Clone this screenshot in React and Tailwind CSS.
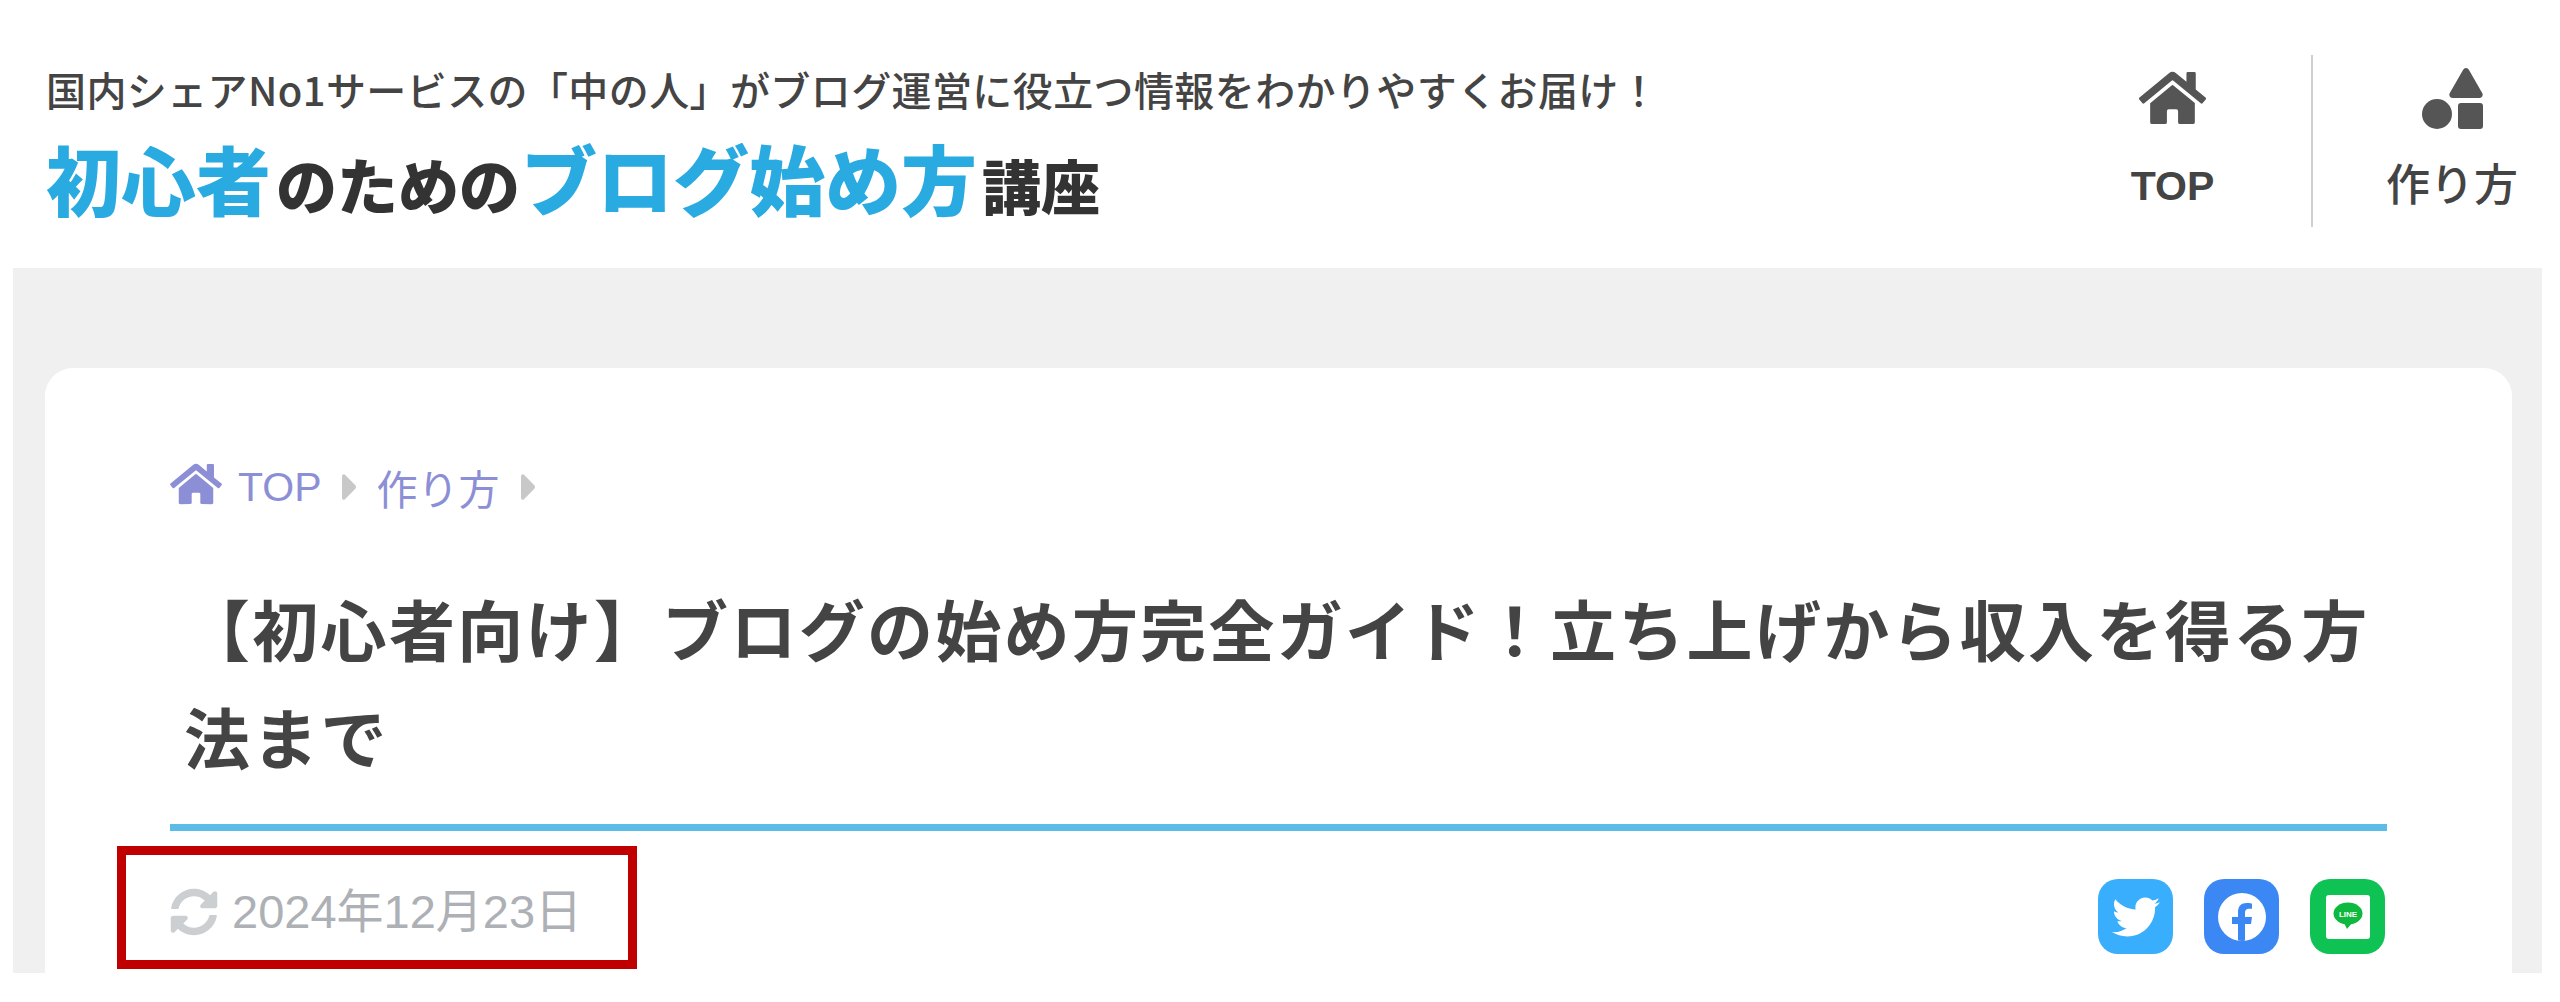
const jp = '"Noto Sans CJK JP","Liberation Sans",sans-serif';
const latin = '"Liberation Sans","Noto Sans CJK JP",sans-serif';

function House({ className }) {
  return (
    <svg viewBox="0 0 576 512" className={className} fill="currentColor">
      <path d="M280.4 148.3L96 300.1V464a16 16 0 0 0 16 16l112.100-.3a16 16 0 0 0 15.900-16V368a16 16 0 0 1 16-16h64a16 16 0 0 1 16 16v95.600a16 16 0 0 0 16 16.100L464 480a16 16 0 0 0 16-16V300L295.700 148.300a12.200 12.200 0 0 0-15.300 0zM571.600 251.500L488 182.600V44.100a12 12 0 0 0-12-12h-56a12 12 0 0 0-12 12v72.600L318.500 43a48 48 0 0 0-61 0L4.300 251.500a12 12 0 0 0-1.600 16.900l25.500 31A12 12 0 0 0 45.200 301l235.200-193.700a12.200 12.200 0 0 1 15.300 0L530.900 301a12 12 0 0 0 16.900-1.600l25.500-31a12 12 0 0 0-1.700-16.900z" />
    </svg>
  );
}

function Shapes({ className }) {
  return (
    <svg viewBox="0 0 61 61" className={className} fill="currentColor">
      <path d="M44 0c1.300 0 2.300.8 3 2l13.200 23c1.300 2.300-.2 5-2.900 5H30.700c-2.700 0-4.200-2.700-2.900-5L41 2c.7-1.200 1.700-2 3-2z" />
      <ellipse cx="15" cy="46" rx="15" ry="15" />
      <rect x="36" y="35" width="25" height="26" rx="3" />
    </svg>
  );
}

function Sync({ className }) {
  return (
    <svg viewBox="0 0 512 512" className={className} fill="currentColor">
      <path d="M370.720 133.280C339.458 104.008 298.888 87.962 255.848 88c-77.458.068-144.328 53.178-162.791 126.850-1.344 5.363-6.122 9.150-11.651 9.150H24.103c-7.498 0-13.194-6.807-11.807-14.176C33.933 94.924 134.813 8 256 8c66.448 0 126.791 26.136 171.315 68.685L463.030 40.970C478.149 25.851 504 36.559 504 57.941V192c0 13.255-10.745 24-24 24H345.941c-21.382 0-32.090-25.851-16.971-40.971l41.750-41.749zM32 296h134.059c21.382 0 32.090 25.851 16.971 40.971l-41.750 41.750c31.262 29.273 71.835 45.319 114.876 45.280 77.418-.070 144.315-53.144 162.787-126.849 1.344-5.363 6.122-9.150 11.651-9.150h57.304c7.498 0 13.194 6.807 11.807 14.176C478.067 417.076 377.187 504 256 504c-66.448 0-126.791-26.136-171.315-68.685L48.970 471.030C33.851 486.149 8 475.441 8 454.059V320c0-13.255 10.745-24 24-24z" />
    </svg>
  );
}

function Caret({ className }) {
  return (
    <svg viewBox="0 0 14 26" className={className} fill="currentColor">
      <path d="M0 2.500c0-2 1.700-3 3-1.800l10.300 10.500c.9.900.9 2.700 0 3.600L3 25.300C1.700 26.500 0 25.500 0 23.500z" />
    </svg>
  );
}

function Twitter({ className }) {
  return (
    <svg viewBox="0 0 512 512" className={className} fill="currentColor">
      <path d="M459.370 151.716c.325 4.548.325 9.097.325 13.645 0 138.720-105.583 298.558-298.558 298.558-59.452 0-114.680-17.219-161.137-47.106 8.447.974 16.568 1.299 25.340 1.299 49.055 0 94.213-16.568 130.274-44.832-46.132-.975-84.792-31.188-98.112-72.772 6.498.974 12.995 1.624 19.818 1.624 9.421 0 18.843-1.300 27.614-3.573-48.081-9.747-84.143-51.980-84.143-102.985v-1.299c13.969 7.797 30.214 12.670 47.431 13.319-28.264-18.843-46.781-51.005-46.781-87.391 0-19.492 5.197-37.360 14.294-52.954 51.655 63.675 129.300 105.258 216.365 109.807-1.624-7.797-2.599-15.918-2.599-24.040 0-57.828 46.782-104.934 104.934-104.934 30.213 0 57.502 12.670 76.670 33.137 23.715-4.548 46.456-13.320 66.599-25.340-7.798 24.366-24.366 44.833-46.132 57.827 21.117-2.273 41.584-8.122 60.426-16.243-14.292 20.791-32.161 39.308-52.628 54.253z" />
    </svg>
  );
}

function Facebook({ className }) {
  return (
    <svg viewBox="0 0 48 48" className={className}>
      <circle cx="24" cy="24" r="24" fill="#ffffff" />
      <path fill="#3b88f5" d="M33 31l1-7h-7v-4.500c0-2 1-3.800 4-3.800h3V10.500S31.300 10 28.700 10c-5.400 0-8.700 3.200-8.700 9V24h-6v7h6v16.600c1.300.2 2.600.4 4 .4s2.700-.1 3-.4V31z" />
    </svg>
  );
}

function LineIcon({ className }) {
  return (
    <svg viewBox="0 0 44 44" className={className}>
      <rect width="44" height="44" rx="3" fill="#ffffff" />
      <ellipse cx="22" cy="18.500" rx="14.500" ry="11" fill="#0fb83f" />
      <path d="M18 28h8l-5 6z" fill="#0fb83f" />
      <text x="22" y="21.500" textAnchor="middle" fontSize="8" fontWeight="700" fill="#ffffff" fontFamily="Liberation Sans">LINE</text>
    </svg>
  );
}

export default function App() {
  return (
    <div className="relative h-[1002px] bg-white overflow-hidden" style={{ fontFamily: jp }}>
      <header className="h-[268px] flex justify-between pl-[46px]">
        <div className="pt-[64px]">
          <p className="text-[40px] leading-[50px] font-medium text-[#444444] whitespace-nowrap tracking-[0.4px]">国内シェアNo1サービスの「中の人」がブログ運営に役立つ情報をわかりやすくお届け！</p>
          <p className="mt-[23px] font-black text-[#333333] whitespace-nowrap flex items-baseline leading-[80px] h-[80px]">
            <span className="text-[75px] text-[#29abe2]">初心者</span>
            <span className="ml-[5px] text-[61px]">のための</span>
            <span className="ml-[1px] text-[76px] text-[#29abe2]">ブログ始め方</span>
            <span className="ml-[5px] text-[59px]">講座</span>
          </p>
        </div>
        <nav className="flex pt-[55px] h-[227px]">
          <div className="w-[279px] h-[172px] border-r-2 border-[#d0d0d0] flex flex-col items-center">
            <House className="w-[67px] h-[60px] text-[#555555] mt-[13px]" />
            <span className="mt-[33px] text-[41px] leading-[50px] font-bold text-[#444444]" style={{ fontFamily: latin }}>TOP</span>
          </div>
          <div className="w-[247px] pl-[31px] h-[172px] flex flex-col items-center">
            <Shapes className="w-[61px] h-[61px] text-[#555555] mt-[13px]" />
            <span className="mt-[28px] text-[44px] leading-[50px] font-medium text-[#444444]">作り方</span>
          </div>
        </nav>
      </header>
      <main className="mx-[13px] w-[2529px] h-[705px] bg-[#f0f0f0] pt-[100px] px-[32px]">
        <section className="h-[605px] w-[2467px] bg-white rounded-t-[28px] px-[125px]">
          <nav className="pt-[92px] h-[146px] flex items-center text-[#8c8fd6] text-[41px] leading-[50px]">
            <House className="w-[52px] h-[46px] -mt-[6px]" />
            <span className="ml-[16px]" style={{ fontFamily: latin }}>TOP</span>
            <Caret className="ml-[20px] w-[14px] h-[26px] text-[#c8c8c8]" />
            <span className="ml-[21px]">作り方</span>
            <Caret className="ml-[21px] w-[14px] h-[26px] text-[#c8c8c8]" />
          </nav>
          <h1 className="mt-[59px] pl-[14px] text-[66px] leading-[108px] font-bold text-[#444444] tracking-[2.3px] whitespace-nowrap">【初心者向け】ブログの始め方完全ガイド！立ち上げから収入を得る方<br />法まで</h1>
          <div className="mt-[35px] h-[7px] bg-[#5bbce8]" />
          <div className="mt-[48px] pr-[2px] flex justify-between items-center">
            <div className="flex items-center gap-[14px] mb-[10px] text-[#adb0b5] text-[47px] leading-[50px]">
              <Sync className="w-[48px] h-[48px] text-[#cccfd2]" />
              <span style={{ fontFamily: latin }}>2024年12月23日</span>
            </div>
            <div className="flex gap-[31px]">
              <div className="w-[75px] h-[75px] rounded-[20px] bg-[#39aefd] flex items-center justify-center"><Twitter className="w-[48px] h-[48px] text-white" /></div>
              <div className="w-[75px] h-[75px] rounded-[20px] bg-[#3b88f5] flex items-center justify-center"><Facebook className="w-[48px] h-[48px]" /></div>
              <div className="w-[75px] h-[75px] rounded-[20px] bg-[#0ec254] flex items-center justify-center"><LineIcon className="w-[44px] h-[44px]" /></div>
            </div>
          </div>
        </section>
      </main>
      <div className="absolute left-[117px] top-[846px] w-[520px] h-[123px] border-[9px] border-[#c00000]" />
    </div>
  );
}
